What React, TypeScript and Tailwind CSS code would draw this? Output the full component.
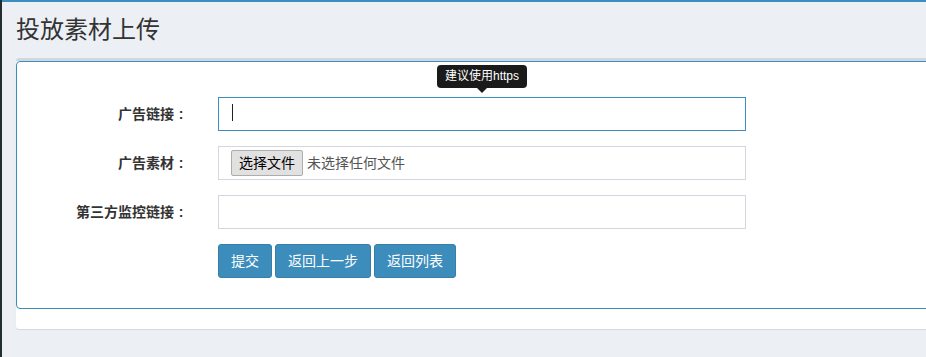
const fieldBox = 'h-[34px] w-[528px] border bg-white'

function Label({ children }: { children: string }) {
  return (
    <label className="w-[186px] pr-[15px] text-right text-[14px] font-bold leading-[34px] text-[#333]">
      {children}
      <span className="inline-block w-[14px] text-center">:</span>
    </label>
  )
}

export default function App() {
  return (
    <div className="flex min-h-[357px] w-[926px] overflow-hidden bg-[#ecf0f5] font-['Liberation_Sans','Noto_Sans_CJK_SC',sans-serif]">
      <div className="w-[2px] shrink-0 bg-[#222d32]" />

      <div className="flex-1 border-t-2 border-[#3c8dbc] pl-[14px] pt-[13px]">
        <h1 className="mb-[13px] text-[24px] font-normal leading-[30px] text-[#333]">投放素材上传</h1>

        <section className="w-[1000px] rounded-[3px] border-t-[3px] border-[#d2d6de] bg-white pb-[20px] shadow-[0_1px_1px_rgba(0,0,0,0.1)]">
          <div className="relative h-[248px] rounded-[4px] border border-[#3c8dbc] pt-[35px]">
            {/* tooltip */}
            <div className="absolute left-[420px] top-[3px] flex flex-col items-center">
              <div className="h-[23px] w-[90px] rounded-[4px] bg-[#1a1a1a] text-center text-[12px] leading-[23px] text-white">
                建议使用https
              </div>
              <div className="h-0 w-0 border-x-[5px] border-t-[5px] border-x-transparent border-t-[#1a1a1a]" />
            </div>

            <div className="flex flex-col gap-[15px]">
              <div className="flex items-center gap-[15px]">
                <Label>广告链接</Label>
                <div className={`${fieldBox} relative border-[#3c8dbc]`}>
                  <span className="absolute left-[13px] top-[6px] h-[17px] w-px bg-[#222]" />
                </div>
              </div>

              <div className="flex items-center gap-[15px]">
                <Label>广告素材</Label>
                <div className={`${fieldBox} flex items-center border-[#d2d6de] pl-[12px]`}>
                  <span className="h-[26px] rounded-[2px] border border-[#adadad] bg-[#e1e1e1] px-[7px] text-[14px] leading-[24px] text-black">
                    选择文件
                  </span>
                  <span className="ml-[4px] text-[14px] text-[#555]">未选择任何文件</span>
                </div>
              </div>

              <div className="flex items-center gap-[15px]">
                <Label>第三方监控链接</Label>
                <div className={`${fieldBox} border-[#d2d6de]`} />
              </div>

              <div className="flex gap-[3px] pl-[201px]">
                {['提交', '返回上一步', '返回列表'].map((t) => (
                  <button
                    key={t}
                    className="h-[34px] rounded-[3px] border border-[#367fa9] bg-[#3c8dbc] px-[12px] text-[14px] leading-[20px] text-white"
                  >
                    {t}
                  </button>
                ))}
              </div>
            </div>
          </div>
        </section>
      </div>
    </div>
  )
}
